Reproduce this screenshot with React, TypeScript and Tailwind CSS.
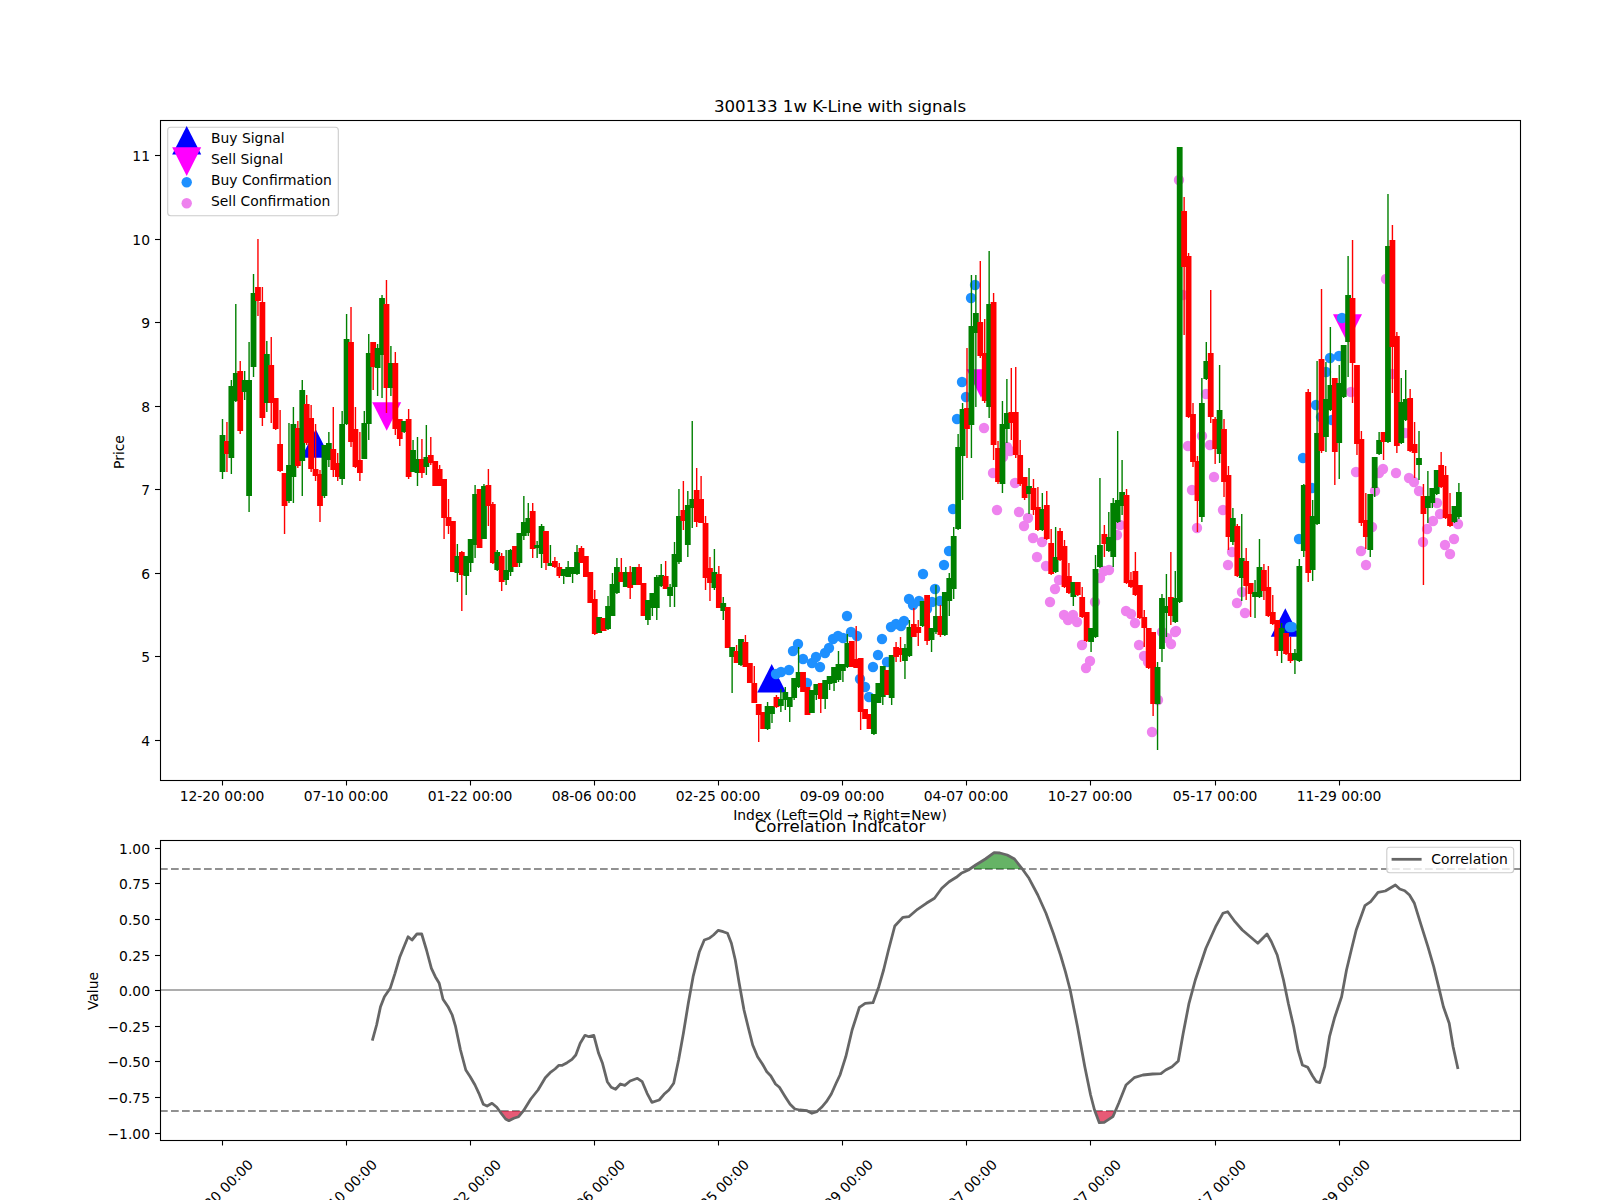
const candles: number[][] = [
  [1,419,435,472,479],[0,422,441,454,472],[1,380,386,458,474],[1,304,373,401,402],[0,361,371,431,434],
  [1,371,380,392,400],[1,342,380,496,512],[1,274,293,367,377],[0,239,287,301,316],[0,287,302,418,426],
  [1,341,354,403,412],[0,337,365,403,423],[0,398,398,429,430],[0,410,444,471,472],[0,473,473,506,534],
  [1,423,465,501,503],[1,407,424,477,503],[0,421,428,466,468],[1,380,390,461,496],[0,395,404,443,445],
  [0,405,418,469,472],[0,424,469,476,481],[0,470,474,506,522],[1,445,445,496,498],[1,432,443,460,467],
  [0,407,449,470,477],[0,453,463,477,481],[1,411,424,479,485],[1,314,339,424,425],[0,307,342,442,447],
  [0,407,429,467,468],[0,432,460,473,481],[1,411,423,459,459],[1,334,353,424,440],[0,342,342,367,390],
  [1,344,348,368,396],[1,295,298,355,398],[0,280,304,388,413],[1,346,363,388,396],[0,352,363,429,435],
  [0,419,419,439,446],[1,421,421,432,433],[0,409,419,477,479],[1,440,450,472,472],[1,437,459,473,486],
  [0,439,459,473,478],[1,425,457,467,475],[0,437,455,463,465],[0,461,461,486,486],[0,465,469,486,486],
  [0,479,479,518,539],[0,499,517,526,534],[0,521,521,572,572],[1,544,556,573,582],[0,551,552,575,611],
  [1,556,556,576,595],[1,539,539,563,572],[1,485,494,545,558],[0,489,489,548,548],[1,484,486,539,539],
  [0,469,485,506,526],[0,502,504,563,564],[1,550,552,570,571],[0,553,556,582,591],[1,550,570,580,585],
  [1,549,550,572,576],[0,546,546,567,567],[1,533,533,563,567],[1,496,522,536,540],[1,503,518,533,536],
  [0,503,511,549,558],[1,541,545,548,558],[1,524,526,554,568],[0,531,531,563,570],[1,545,563,566,565],
  [0,557,561,567,568],[0,563,567,576,578],[1,569,569,576,584],[1,561,567,577,577],[1,567,567,574,583],
  [1,545,552,574,575],[0,546,548,563,563],[0,556,556,577,577],[0,572,572,603,603],[0,590,599,634,635],
  [1,617,617,633,633],[0,618,618,631,631],[1,596,606,629,630],[1,573,584,616,616],[1,558,567,593,594],
  [0,558,572,582,582],[1,567,572,587,587],[0,566,572,588,599],[1,567,567,585,585],[0,564,567,585,585],
  [0,583,583,616,616],[1,600,600,620,625],[1,593,593,608,616],[1,575,577,608,620],[1,564,575,586,587],
  [0,561,576,589,589],[1,584,587,596,607],[1,542,554,587,607],[1,489,516,562,564],[0,481,510,521,530],
  [1,491,505,545,557],[1,421,499,508,528],[0,468,490,522,527],[0,476,499,523,523],[0,516,523,578,590],
  [0,557,568,583,601],[1,549,572,588,590],[0,566,574,608,608],[1,597,603,611,620],[0,607,607,648,648],
  [1,647,647,657,693],[0,645,651,663,663],[1,639,639,665,666],[0,635,642,667,667],[0,663,663,683,683],
  [0,666,683,703,703],[0,704,704,715,742],[0,712,712,729,729],[1,702,706,729,730],[1,706,706,714,723],
  [0,695,697,707,708],[1,689,699,706,712],[1,687,692,700,710],[1,697,697,707,722],[1,678,678,698,700],
  [1,647,672,687,688],[0,672,672,692,692],[0,687,687,715,715],[1,690,690,713,713],[1,684,684,695,700],
  [0,683,683,699,713],[1,680,680,699,709],[1,676,676,684,690],[1,667,667,683,691],[1,651,664,680,682],
  [1,664,664,671,682],[1,634,643,667,668],[0,641,641,667,667],[0,626,659,668,668],[0,658,658,712,730],
  [0,709,709,719,719],[0,714,714,729,729],[1,694,694,734,735],[1,683,683,703,703],[1,666,666,697,705],
  [0,670,670,695,695],[1,655,655,698,705],[0,642,647,657,662],[0,637,648,655,662],[1,644,648,661,679],
  [1,620,627,656,657],[0,608,624,637,637],[0,620,627,633,646],[1,601,601,626,627],[0,595,595,641,645],
  [1,628,628,640,652],[1,585,616,632,634],[0,605,616,635,637],[1,592,592,635,636],[1,573,578,601,616],
  [1,527,536,589,599],[1,434,447,529,530],[1,403,409,456,500],[0,348,408,429,458],[1,275,326,425,458],
  [1,275,313,333,407],[0,261,322,356,358],[0,319,353,401,403],[1,251,304,407,418],[0,293,302,445,460],
  [0,441,448,482,484],[1,401,424,484,493],[1,379,413,429,443],[0,368,412,423,440],[0,367,412,455,458],
  [0,440,455,484,486],[0,477,477,498,500],[1,468,486,494,514],[0,479,488,510,515],[0,487,507,530,531],
  [1,493,509,530,531],[0,491,505,539,540],[0,529,543,574,575],[1,527,557,572,573],[0,528,531,560,561],
  [0,540,546,587,588],[0,563,576,593,594],[1,582,582,597,606],[0,582,582,595,596],[0,587,597,617,618],
  [0,612,612,641,642],[1,628,628,642,652],[1,555,569,637,638],[1,478,545,567,568],[0,525,534,544,557],
  [1,512,537,551,552],[1,498,503,557,567],[1,431,500,522,523],[1,460,492,506,515],[0,489,495,583,584],
  [0,572,580,587,588],[0,552,571,595,596],[0,585,585,618,619],[0,610,617,628,647],[0,628,628,668,669],
  [0,632,632,704,716],[1,662,667,704,750],[1,594,598,649,662],[1,574,606,613,637],[0,552,597,616,625],
  [1,571,598,622,623],[1,147,147,602,603],[0,197,211,267,335],[0,253,256,417,418],[0,403,414,462,467],
  [0,456,461,501,532],[1,378,403,517,522],[1,342,361,379,380],[0,290,353,417,423],[0,417,419,449,464],
  [1,365,410,454,463],[0,419,429,482,497],[0,466,475,537,550],[1,508,518,542,545],[0,524,526,576,577],
  [1,514,558,578,601],[0,548,561,586,600],[0,583,583,594,617],[1,580,592,597,618],[1,539,567,597,598],
  [0,564,570,591,600],[0,566,587,616,617],[0,595,612,624,625],[0,620,620,651,656],[1,623,628,651,663],
  [0,633,633,654,655],[0,637,653,661,663],[1,649,653,660,674],[1,559,566,661,662],[1,484,485,551,557],
  [0,389,392,573,582],[1,500,516,570,581],[1,361,433,524,525],[0,289,359,451,453],[1,362,399,437,452],
  [1,327,385,410,411],[0,378,378,452,485],[1,365,383,443,479],[1,345,345,397,398],[1,256,295,342,377],
  [0,240,298,363,403],[0,365,365,444,455],[0,431,439,523,526],[0,493,520,537,549],[1,494,494,550,557],
  [1,468,457,488,497],[1,432,440,454,455],[0,432,432,442,460],[1,194,246,442,443],[0,225,240,347,393],
  [0,332,336,446,453],[1,378,402,443,444],[1,370,399,420,421],[0,389,398,451,452],[0,422,444,453,478],
  [1,431,458,465,480],[0,484,496,514,585],[1,471,496,508,523],[1,488,488,503,508],[1,470,470,494,495],
  [0,452,465,487,488],[0,466,475,518,519],[0,493,514,526,527],[1,506,506,522,523],[1,483,492,517,519],
];

const buyDots: number[][] = [
  [776,674],[781,672],[789,670],[793,651],[798,644],[803,659],[807,683],[812,663],[816,657],[820,667],
  [825,653],[829,648],[833,639],[838,636],[843,638],[847,616],[851,632],[857,636],[860,679],[865,687],
  [869,697],[873,667],[878,655],[882,639],[887,662],[891,627],[896,624],[901,626],[904,621],[909,599],
  [913,605],[919,601],[927,609],[923,574],[932,602],[935,589],[940,601],[944,565],[949,551],[953,509],
  [957,419],[966,397],[962,382],[971,298],[975,285],[1303,458],[1312,488],[1299,539],[1290,627],[1292,627],
  [1316,405],[1321,417],[1326,372],[1330,358],[1339,356],[1342,318],[1332,420],
];

const sellDots: number[][] = [
  [997,510],[1015,483],[1019,512],[1028,518],[1024,526],[1033,538],[1042,542],[1037,557],[1046,566],[1059,580],
  [1055,589],[1050,602],[1064,615],[1068,620],[1073,615],[1077,622],[1082,645],[1090,661],[1086,668],[1095,602],
  [1100,578],[1104,571],[1109,570],[1117,535],[1120,525],[1126,611],[1131,614],[1135,623],[1139,645],[1144,656],
  [1148,662],[1152,732],[1158,700],[1162,632],[1167,638],[1171,644],[1175,632],[1192,490],[1197,528],[984,428],
  [1007,447],[1010,451],[1003,457],[993,473],[1188,446],[1183,295],[1179,180],[1206,394],[1351,392],[1386,279],
  [1392,374],[1202,436],[1210,445],[1214,477],[1223,510],[1232,552],[1228,565],[1242,592],[1237,603],[1245,613],
  [1176,631],[1356,472],[1375,491],[1372,527],[1361,551],[1366,565],[1379,473],[1383,469],[1396,473],[1409,478],
  [1414,482],[1419,491],[1437,503],[1440,514],[1433,521],[1427,529],[1423,542],[1458,524],[1454,539],[1445,545],
  [1450,554],[1405,433],
];

// curve read off the two halves of the lower panel
const left: number[][] = [
  [603,812],[612,765],[620,710],[628,680],[640,655],[650,610],[660,560],[670,525],[677,500],[685,510],[695,492],[705,492],
  [715,540],[725,595],[733,620],[741,640],[749,688],[760,712],[768,735],[775,770],[785,840],[796,900],[805,920],[815,945],
  [823,970],[832,1003],[840,1008],[850,1000],[860,1012],[870,1032],[878,1047],[885,1052],[895,1045],[905,1040],[915,1022],
  [930,987],[945,960],[960,923],[970,908],[980,897],[988,886],[995,886],[1005,878],[1015,868],[1023,855],[1032,820],
  [1042,796],[1050,800],[1060,796],[1070,850],[1078,880],[1088,935],[1096,952],[1105,958],[1115,942],[1124,946],[1135,933],
  [1150,925],[1160,935],[1170,970],[1180,997],[1195,990],[1205,973],[1215,960],[1225,940],[1235,870],[1245,790],[1255,700],
  [1265,620],[1278,545],[1288,510],[1298,505],[1307,495],[1317,481],[1327,485],[1336,490],[1344,520],[1352,570],[1360,640],
  [1370,720],[1380,780],[1388,825],[1398,860],[1408,882],[1417,905],[1425,917],[1435,942],[1443,952],[1455,980],[1465,1003],
  [1475,1017],[1485,1020],[1500,1022],[1510,1030],[1520,1025],[1530,1012],[1540,995],[1550,972],[1560,940],
];
const right: number[][] = [
  [0,915],[12,860],[25,780],[40,712],[52,700],[68,698],[80,650],[90,600],[100,540],[113,468],[130,442],[142,440],[160,418],
  [178,400],[195,385],[210,355],[225,335],[240,322],[250,310],[265,300],[280,285],[300,267],[318,248],[330,249],[345,255],
  [360,267],[375,295],[390,325],[408,375],[425,430],[440,490],[455,555],[465,605],[475,660],[490,770],[505,890],[517,975],
  [525,1020],[535,1058],[545,1057],[563,1040],[575,1000],[590,945],[607,923],[625,915],[645,912],[662,911],[672,900],
  [685,890],[698,873],[708,790],[720,700],[733,630],[755,535],[775,470],[790,430],[800,425],[815,455],[830,480],[850,505],
  [862,520],[881,492],[890,515],[902,555],[915,630],[925,700],[936,770],[945,840],[954,885],[965,892],[975,918],[983,935],
  [990,938],[1000,890],[1010,800],[1020,745],[1035,680],[1045,600],[1055,540],[1065,480],[1083,407],[1095,395],[1110,367],
  [1125,363],[1146,345],[1155,357],[1165,362],[1175,375],[1185,400],[1200,470],[1213,530],[1225,590],[1235,650],[1245,710],
  [1257,760],[1265,830],[1275,897],
];

const pts = (list: number[][], ox: number) =>
  list.map(([x, y]) => `${(ox + x / 2.0632).toFixed(1)},${(770 + y / 3).toFixed(1)}`).join(" ");

const greenArea = [[275,297],[280,285],[300,267],[318,248],[330,249],[345,255],[360,267],[375,297]];
const redArea1 = [[868,1023],[870,1032],[878,1047],[885,1052],[895,1045],[905,1040],[915,1023]];
const redArea2 = [[526,1023],[535,1058],[545,1057],[563,1040],[568,1023]];

const ticks = ["12-20", "07-10", "01-22", "08-06", "02-25", "09-09", "04-07", "10-27", "05-17", "11-29"];
const tickX = (i: number) => Math.floor(222.5 + i * 124.07) + 0.5;
const priceTicks = [11, 10, 9, 8, 7, 6, 5, 4];
const valueTicks = ["1.00", "0.75", "0.50", "0.25", "0.00", "−0.25", "−0.50", "−0.75", "−1.00"];

function up(x: number, y: number) {
  return `${x - 14.5},${y + 14.3} ${x},${y - 14.3} ${x + 14.5},${y + 14.3}`;
}
function down(x: number, y: number) {
  return `${x - 14.5},${y - 14.3} ${x},${y + 14.3} ${x + 14.5},${y - 14.3}`;
}

export default function App() {
  return (
    <div className="w-[1600px] h-[1200px] bg-white overflow-hidden">
      <svg width="1600" height="1200" viewBox="0 0 1600 1200" className="block font-['DejaVu_Sans'] text-[13.89px] fill-black">
        {/* Price panel */}
        <polygon points={up(315.7, 443.5)} fill="#0000ff" />
        <polygon points={up(771.7, 678.3)} fill="#0000ff" />
        <polygon points={up(1285.3, 622.5)} fill="#0000ff" />
        <polygon points={down(386.7, 416.5)} fill="#ff00ff" />
        <polygon points={down(981, 383.5)} fill="#ff00ff" />
        <polygon points={down(1347.5, 328.5)} fill="#ff00ff" />
        {sellDots.map(([x, y], i) => <circle key={i} cx={x} cy={y} r="5.2" fill="#ee82ee" />)}
        {buyDots.map(([x, y], i) => <circle key={i} cx={x} cy={y} r="5.2" fill="#1e90ff" />)}
        {candles.map(([g, wt, bt, bb, wb], i) => {
          const x = 222.5 + i * 4.4315;
          const c = g ? "#008000" : "#ff0000";
          return (
            <g key={i} fill={c}>
              <rect x={x - 0.7} y={wt} width="1.4" height={wb - wt} />
              <rect x={x - 2.9} y={bt} width="5.8" height={bb - bt} />
            </g>
          );
        })}
        <rect x="160.5" y="120.5" width="1360" height="660" fill="none" stroke="#000" strokeWidth="1.1" />
        {ticks.map((t, i) => (
          <g key={t}>
            <line x1={tickX(i)} x2={tickX(i)} y1="780" y2="785.5" stroke="#000" strokeWidth="1.1" />
            <text x={tickX(i) - 0.5} y="801" textAnchor="middle">{t} 00:00</text>
          </g>
        ))}
        {priceTicks.map((p) => {
          const y = Math.floor(155.7 + (11 - p) * 83.5) + 0.5;
          return (
            <g key={p}>
              <line x1="155" x2="160" y1={y} y2={y} stroke="#000" strokeWidth="1.1" />
              <text x="150" y={y + 5} textAnchor="end">{p}</text>
            </g>
          );
        })}
        <text x="840" y="112" textAnchor="middle" className="text-[16.67px]">300133 1w K-Line with signals</text>
        <text x="840" y="820" textAnchor="middle">Index (Left=Old → Right=New)</text>
        <text transform="rotate(-90 124 452)" x="124" y="452" textAnchor="middle">Price</text>

        {/* Legend */}
        <rect x="167.7" y="127.3" width="170.6" height="88.4" rx="3" fill="#fff" fillOpacity="0.8" stroke="#ccc" strokeWidth="1.1" />
        <polygon points={up(186.7, 140.2)} fill="#0000ff" />
        <polygon points={down(186.7, 161.6)} fill="#ff00ff" />
        <circle cx="186.7" cy="182.3" r="5.2" fill="#1e90ff" />
        <circle cx="186.7" cy="203.3" r="5.2" fill="#ee82ee" />
        <text x="211" y="143">Buy Signal</text>
        <text x="211" y="164">Sell Signal</text>
        <text x="211" y="185">Buy Confirmation</text>
        <text x="211" y="206">Sell Confirmation</text>

        {/* Correlation panel */}
        <line x1="160" x2="1520" y1="869" y2="869" stroke="#919191" strokeWidth="2.08" strokeDasharray="7.7 3.3" />
        <line x1="160" x2="1520" y1="1111" y2="1111" stroke="#919191" strokeWidth="2.08" strokeDasharray="7.7 3.3" />
        <line x1="160" x2="1520" y1="990" y2="990" stroke="#adadad" strokeWidth="2.08" />
        <polygon points={pts(greenArea, 840)} fill="#008000" fillOpacity="0.6" />
        <polygon points={pts(redArea1, 80)} fill="#dc143c" fillOpacity="0.7" />
        <polygon points={pts(redArea2, 840)} fill="#dc143c" fillOpacity="0.7" />
        <polyline points={pts(left, 80) + " " + pts(right, 840)} fill="none" stroke="#666" strokeWidth="2.78" strokeLinejoin="round" />
        <rect x="160.5" y="840.5" width="1360" height="300" fill="none" stroke="#000" strokeWidth="1.1" />
        {ticks.map((t, i) => (
          <g key={t}>
            <line x1={tickX(i)} x2={tickX(i)} y1="1140" y2="1145.5" stroke="#000" strokeWidth="1.1" />
            <text transform={`rotate(-45 ${tickX(i) - 2} 1192)`} x={tickX(i) - 2} y="1197" textAnchor="middle">{t} 00:00</text>
          </g>
        ))}
        {valueTicks.map((v, i) => {
          const y = Math.floor(848.3 + i * 35.6) + 0.5;
          return (
            <g key={v}>
              <line x1="155" x2="160" y1={y} y2={y} stroke="#000" strokeWidth="1.1" />
              <text x="150" y={y + 5} textAnchor="end">{v}</text>
            </g>
          );
        })}
        <text x="840" y="832" textAnchor="middle" className="text-[16.67px]">Correlation Indicator</text>
        <text transform="rotate(-90 98 991)" x="98" y="991" textAnchor="middle">Value</text>
        <rect x="1386.8" y="847.3" width="126.9" height="25.4" rx="3" fill="#fff" fillOpacity="0.8" stroke="#ccc" strokeWidth="1.1" />
        <line x1="1391.6" x2="1421.6" y1="859.3" y2="859.3" stroke="#666" strokeWidth="2.78" />
        <text x="1431.3" y="864">Correlation</text>
      </svg>
    </div>
  );
}
